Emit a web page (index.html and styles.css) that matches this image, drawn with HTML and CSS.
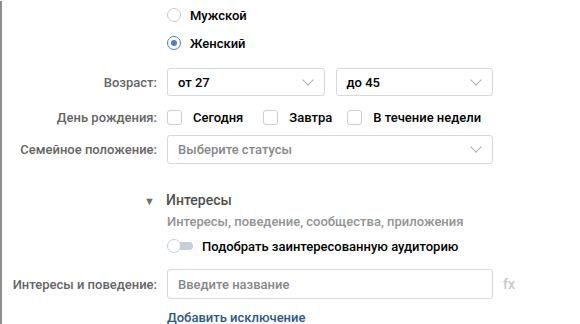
FILE: index.html
```html
<!DOCTYPE html>
<html>
<head>
  <title>Аудитория</title>
  <link rel="stylesheet" href="styles.css">
</head>
<body>
  <div id="form">
    <div class="row row-radio first">
      <div class="label"></div>
      <label class="choice"><span class="radio"></span>Мужской</label>
    </div>
    <div class="row row-radio">
      <div class="label"></div>
      <label class="choice"><span class="radio checked"></span>Женский</label>
    </div>

    <div class="row row-age">
      <div class="label">Возраст:</div>
      <div class="pair">
        <div class="select"><span class="value">от 27</span><span class="chevron"></span></div>
        <div class="select"><span class="value">до 45</span><span class="chevron"></span></div>
      </div>
    </div>

    <div class="row row-birthday">
      <div class="label">День рождения:</div>
      <div class="checks">
        <label class="choice today"><span class="checkbox"></span>Сегодня</label>
        <label class="choice"><span class="checkbox"></span>Завтра</label>
        <label class="choice"><span class="checkbox"></span>В течение недели</label>
      </div>
    </div>

    <div class="row row-family">
      <div class="label">Семейное положение:</div>
      <div class="select wide"><span class="placeholder">Выберите статусы</span><span class="chevron"></span></div>
    </div>

    <div class="row row-heading">
      <div class="label"><span class="arrow">▼</span></div>
      <div class="heading">Интересы</div>
    </div>
    <div class="row row-sub">
      <div class="label"></div>
      <div class="subtitle">Интересы, поведение, сообщества, приложения</div>
    </div>
    <div class="row row-toggle">
      <div class="label"></div>
      <label class="choice"><span class="toggle"><span class="knob"></span></span>Подобрать заинтересованную аудиторию</label>
    </div>

    <div class="row row-interests">
      <div class="label">Интересы и поведение:</div>
      <div class="with-fx">
        <div class="input"><span class="placeholder">Введите название</span></div>
        <span class="fx">fx</span>
      </div>
    </div>
    <div class="row row-link">
      <div class="label"></div>
      <a class="link" href="#">Добавить исключение</a>
    </div>
  </div>
</body>
</html>
```

FILE: styles.css
```css
body {
  margin: 0;
  background: #fff;
  font-family: Roboto, "Liberation Sans", Arial, sans-serif;
  font-size: 13px;
  font-weight: 500;
  color: #000;
}

#form {
  border-left: 2px solid #8e8e8e;
  min-height: 324px;
  box-sizing: border-box;
}

.row {
  display: grid;
  grid-template-columns: 155px 326px;
  column-gap: 10px;
  align-items: center;
}

.label {
  text-align: right;
  color: #656565;
}

.choice {
  display: flex;
  align-items: center;
  gap: 9px;
}

/* radios */
.row-radio { height: 28px; }
.row-radio.first { margin-top: 1px; }

.radio {
  width: 12px;
  height: 12px;
  border: 1px solid #c5cad0;
  border-radius: 50%;
  display: inline-flex;
  align-items: center;
  justify-content: center;
}

.radio.checked {
  border-color: #5181b8;
}

.radio.checked::after {
  content: "";
  width: 6px;
  height: 6px;
  border-radius: 50%;
  background: #5181b8;
}

/* selects */
.row-age { margin-top: 11px; }

.pair {
  display: flex;
  gap: 11px;
}

.select, .input {
  height: 28px;
  border: 1px solid #d3d9de;
  border-radius: 3px;
  box-sizing: border-box;
  display: flex;
  align-items: center;
  justify-content: space-between;
  padding: 0 12px 0 10px;
  flex: 1;
}

.select.wide { height: 29px; }

.chevron {
  width: 7px;
  height: 7px;
  border-right: 1px solid #a9b0b8;
  border-bottom: 1px solid #a9b0b8;
  transform: rotate(45deg);
  margin-top: -5px;
}

.placeholder {
  color: #878787;
}

/* checkboxes */
.row-birthday {
  margin-top: 11px;
  height: 20px;
}

.checks {
  display: flex;
  gap: 15px;
}

.checks .choice { gap: 11px; }
.checks .today { margin-right: 5px; }

.checkbox {
  width: 13px;
  height: 13px;
  border: 1px solid #c5d0db;
  border-radius: 3px;
}

.row-family { margin-top: 8px; }

/* interests block */
.row-heading {
  margin-top: 26px;
  height: 20px;
}

.arrow {
  font-size: 11px;
  color: #6d6d6d;
  padding-right: 2px;
}

.heading {
  font-size: 14px;
  color: #505050;
  margin-left: -1px;
}

.row-sub {
  margin-top: 2px;
  height: 18px;
}

.subtitle {
  color: #939393;
}

.row-toggle {
  margin-top: 6px;
  height: 20px;
}

.toggle {
  position: relative;
  width: 26px;
  height: 14px;
  display: inline-flex;
  align-items: center;
}

.toggle::before {
  content: "";
  width: 24px;
  height: 8px;
  margin-left: 2px;
  border-radius: 4px;
  background: #c5d0db;
}

.knob {
  position: absolute;
  left: 0;
  top: 0;
  width: 12px;
  height: 12px;
  border: 1px solid #c5d0db;
  border-radius: 50%;
  background: #fff;
}

.row-interests { margin-top: 13px; }

.with-fx {
  display: flex;
  align-items: center;
}

.input {
  height: 30px;
  flex: none;
  width: 326px;
}

.fx {
  margin-left: 10px;
  color: #c5c9cd;
  font-size: 14px;
}

.row-link {
  margin-top: 9px;
  height: 18px;
}

.link {
  color: #2a5885;
  text-decoration: none;
}
```
